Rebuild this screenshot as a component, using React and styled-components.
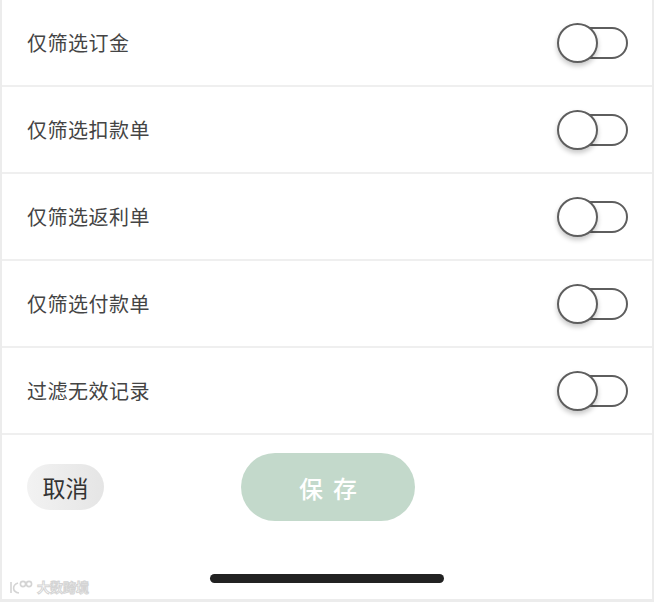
import { useState } from 'react'
import styled, { createGlobalStyle } from 'styled-components'

const GlobalStyle = createGlobalStyle`
  html, body {
    margin: 0;
    padding: 0;
    background: #fff;
  }
  body {
    font-family: "Noto Sans CJK SC", "Noto Sans", sans-serif;
  }
`

const Frame = styled.div`
  width: 654px;
  height: 602px;
  box-sizing: border-box;
  border: 2px solid #ececec;
  border-top: none;
  border-bottom-width: 3px;
  display: flex;
  flex-direction: column;
  position: relative;
  overflow: hidden;
`

const Row = styled.div`
  height: 85px;
  display: flex;
  align-items: center;
  justify-content: space-between;
  padding: 0 24px 0 25px;
  border-bottom: 2px solid #efefef;
  flex-shrink: 0;
`

const Label = styled.span`
  font-size: 20px;
  color: #444;
  letter-spacing: 0.5px;
`

const Track = styled.button`
  position: relative;
  width: 68px;
  height: 32px;
  padding: 0;
  border: 2px solid ${p => (p.$on ? '#7fb08f' : '#5e5e5e')};
  border-radius: 16px;
  background: ${p => (p.$on ? '#c3d9cb' : '#fff')};
  box-sizing: border-box;
  cursor: pointer;
`

const Knob = styled.span`
  position: absolute;
  top: -6px;
  left: ${p => (p.$on ? '28px' : '-5px')};
  width: 41px;
  height: 40px;
  box-sizing: border-box;
  border-radius: 50%;
  border: 2px solid #5e5e5e;
  background: #fff;
  box-shadow: 0 3px 5px rgba(0, 0, 0, 0.22);
`

const Actions = styled.div`
  display: flex;
  align-items: center;
  gap: 137px;
  padding: 18px 0 0 25px;
`

const CancelButton = styled.button`
  width: 77px;
  height: 46px;
  border: none;
  border-radius: 23px;
  background: linear-gradient(90deg, #f2f2f2, #e5e5e5);
  font-family: inherit;
  font-size: 23px;
  color: #333;
  padding: 0;
`

const SaveButton = styled.button`
  width: 174px;
  height: 68px;
  border: none;
  border-radius: 34px;
  background: #c3d9cb;
  font-family: inherit;
  font-size: 24px;
  font-weight: 500;
  color: #fff;
  letter-spacing: 10px;
  padding: 0 0 0 10px;
`

const HomeBar = styled.div`
  width: 234px;
  height: 9px;
  border-radius: 5px;
  background: #222;
  margin: 53px auto 0;
`

const Watermark = styled.div`
  position: absolute;
  left: 6px;
  bottom: 3px;
  display: flex;
  align-items: center;
  gap: 3px;
  font-size: 13px;
  color: #fff;
  font-weight: 700;
  -webkit-text-stroke: 1px #d4d4d4;
`

const FILTERS = ['仅筛选订金', '仅筛选扣款单', '仅筛选返利单', '仅筛选付款单', '过滤无效记录']

function Toggle({ on, onClick }) {
  return (
    <Track $on={on} onClick={onClick}>
      <Knob $on={on} />
    </Track>
  )
}

function App() {
  const [flags, setFlags] = useState(FILTERS.map(() => false))

  const flip = (i) => setFlags(flags.map((f, j) => (j === i ? !f : f)))

  return (
    <Frame>
      <GlobalStyle />
      {FILTERS.map((label, i) => (
        <Row key={label}>
          <Label>{label}</Label>
          <Toggle on={flags[i]} onClick={() => flip(i)} />
        </Row>
      ))}
      <Actions>
        <CancelButton>取消</CancelButton>
        <SaveButton>保存</SaveButton>
      </Actions>
      <HomeBar />
      <Watermark>
        <svg width="26" height="16" viewBox="0 0 26 16" fill="none" stroke="#d4d4d4" strokeWidth="1.6">
          <path d="M3 3 L3 14 M10 4 C4 6 4 13 11 14" />
          <circle cx="15" cy="5" r="2.6" />
          <circle cx="21" cy="5" r="2.6" />
        </svg>
        <span>大数跨境</span>
      </Watermark>
    </Frame>
  )
}

export default App
